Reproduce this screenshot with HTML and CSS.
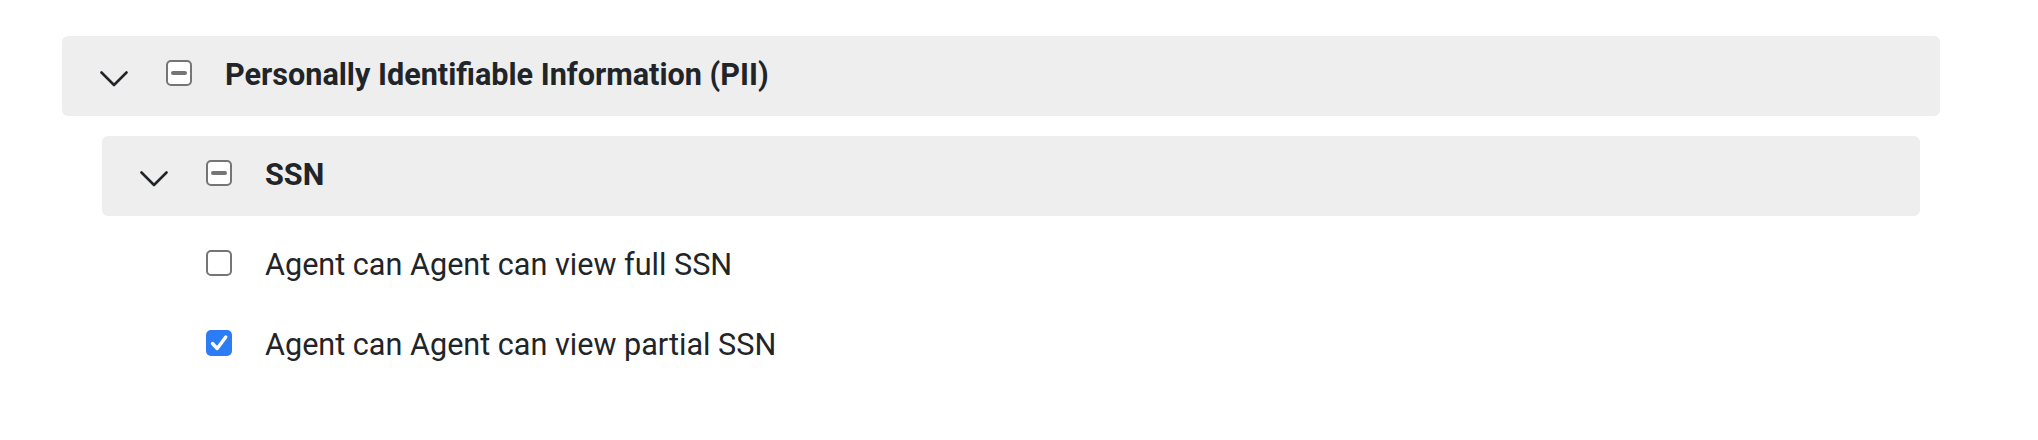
FILE: index.html
```html
<!DOCTYPE html>
<html lang="en">
<head>
<meta charset="utf-8">
<title>Permissions</title>
<link rel="stylesheet" href="styles.css">
</head>
<body>
<div class="tree">
  <div class="group-header">
    <svg class="chevron" width="28" height="16" viewBox="0 0 28 16"><polyline points="1.5,1.5 14,14 26.5,1.5" fill="none" stroke="#212529" stroke-width="2.6" stroke-linecap="round" stroke-linejoin="round"/></svg>
    <span class="partial-box"><span class="partial-bar"></span></span>
    <span class="group-title">Personally Identifiable Information (PII)</span>
  </div>
  <div class="group-children">
    <div class="group-header">
      <svg class="chevron" width="28" height="16" viewBox="0 0 28 16"><polyline points="1.5,1.5 14,14 26.5,1.5" fill="none" stroke="#212529" stroke-width="2.6" stroke-linecap="round" stroke-linejoin="round"/></svg>
      <span class="partial-box"><span class="partial-bar"></span></span>
      <span class="group-title">SSN</span>
    </div>
    <ul class="items">
      <li class="item">
        <span class="check"></span>
        <span class="item-label">Agent can Agent can view full SSN</span>
      </li>
      <li class="item">
        <span class="check checked"><svg width="26" height="26" viewBox="0 0 26 26"><polyline points="6.5,13.5 11.2,18.5 19.8,7" fill="none" stroke="#ffffff" stroke-width="3.4" stroke-linecap="round" stroke-linejoin="round"/></svg></span>
        <span class="item-label">Agent can Agent can view partial SSN</span>
      </li>
    </ul>
  </div>
</div>
</body>
</html>
```
FILE: styles.css
```css
* { box-sizing: border-box; }
html, body { margin: 0; padding: 0; background: #ffffff; }
body {
  font-family: Roboto, "Liberation Sans", Arial, sans-serif;
  color: #212529;
  width: 2038px;
  height: 440px;
  overflow: hidden;
}
.tree {
  padding: 36px 98px 0 62px;
}
.group-header {
  display: flex;
  align-items: flex-start;
  height: 80px;
  background: #eeeeee;
  border-radius: 6px;
  padding-left: 38px;
}
.chevron {
  flex: none;
  margin-top: 35px;
}
.partial-box {
  flex: none;
  width: 26px;
  height: 26px;
  margin-top: 24px;
  margin-left: 38px;
  border: 2px solid #757575;
  border-radius: 5px;
  background: #ffffff;
  display: flex;
  align-items: center;
  justify-content: center;
}
.partial-bar {
  width: 16px;
  height: 4px;
  border-radius: 2px;
  background: #757575;
}
.group-title {
  margin-left: 33px;
  margin-top: 24px;
  font-size: 30.6px;
  line-height: 30px;
  font-weight: 700;
  white-space: nowrap;
}
.group-children {
  margin-top: 20px;
  padding-left: 40px;
  padding-right: 20px;
}
.items {
  list-style: none;
  margin: 0;
  padding: 34px 0 0 104px;
}
.item {
  display: flex;
  align-items: flex-start;
  height: 80px;
}
.check {
  flex: none;
  width: 26px;
  height: 26px;
  border: 2px solid #757575;
  border-radius: 5px;
  background: #ffffff;
  display: block;
}
.check.checked {
  border: none;
  background: #2b7cf5;
}
.check svg { display: block; }
.item-label {
  margin-left: 33px;
  margin-top: 0;
  font-size: 30.6px;
  line-height: 30px;
  white-space: nowrap;
}
```
